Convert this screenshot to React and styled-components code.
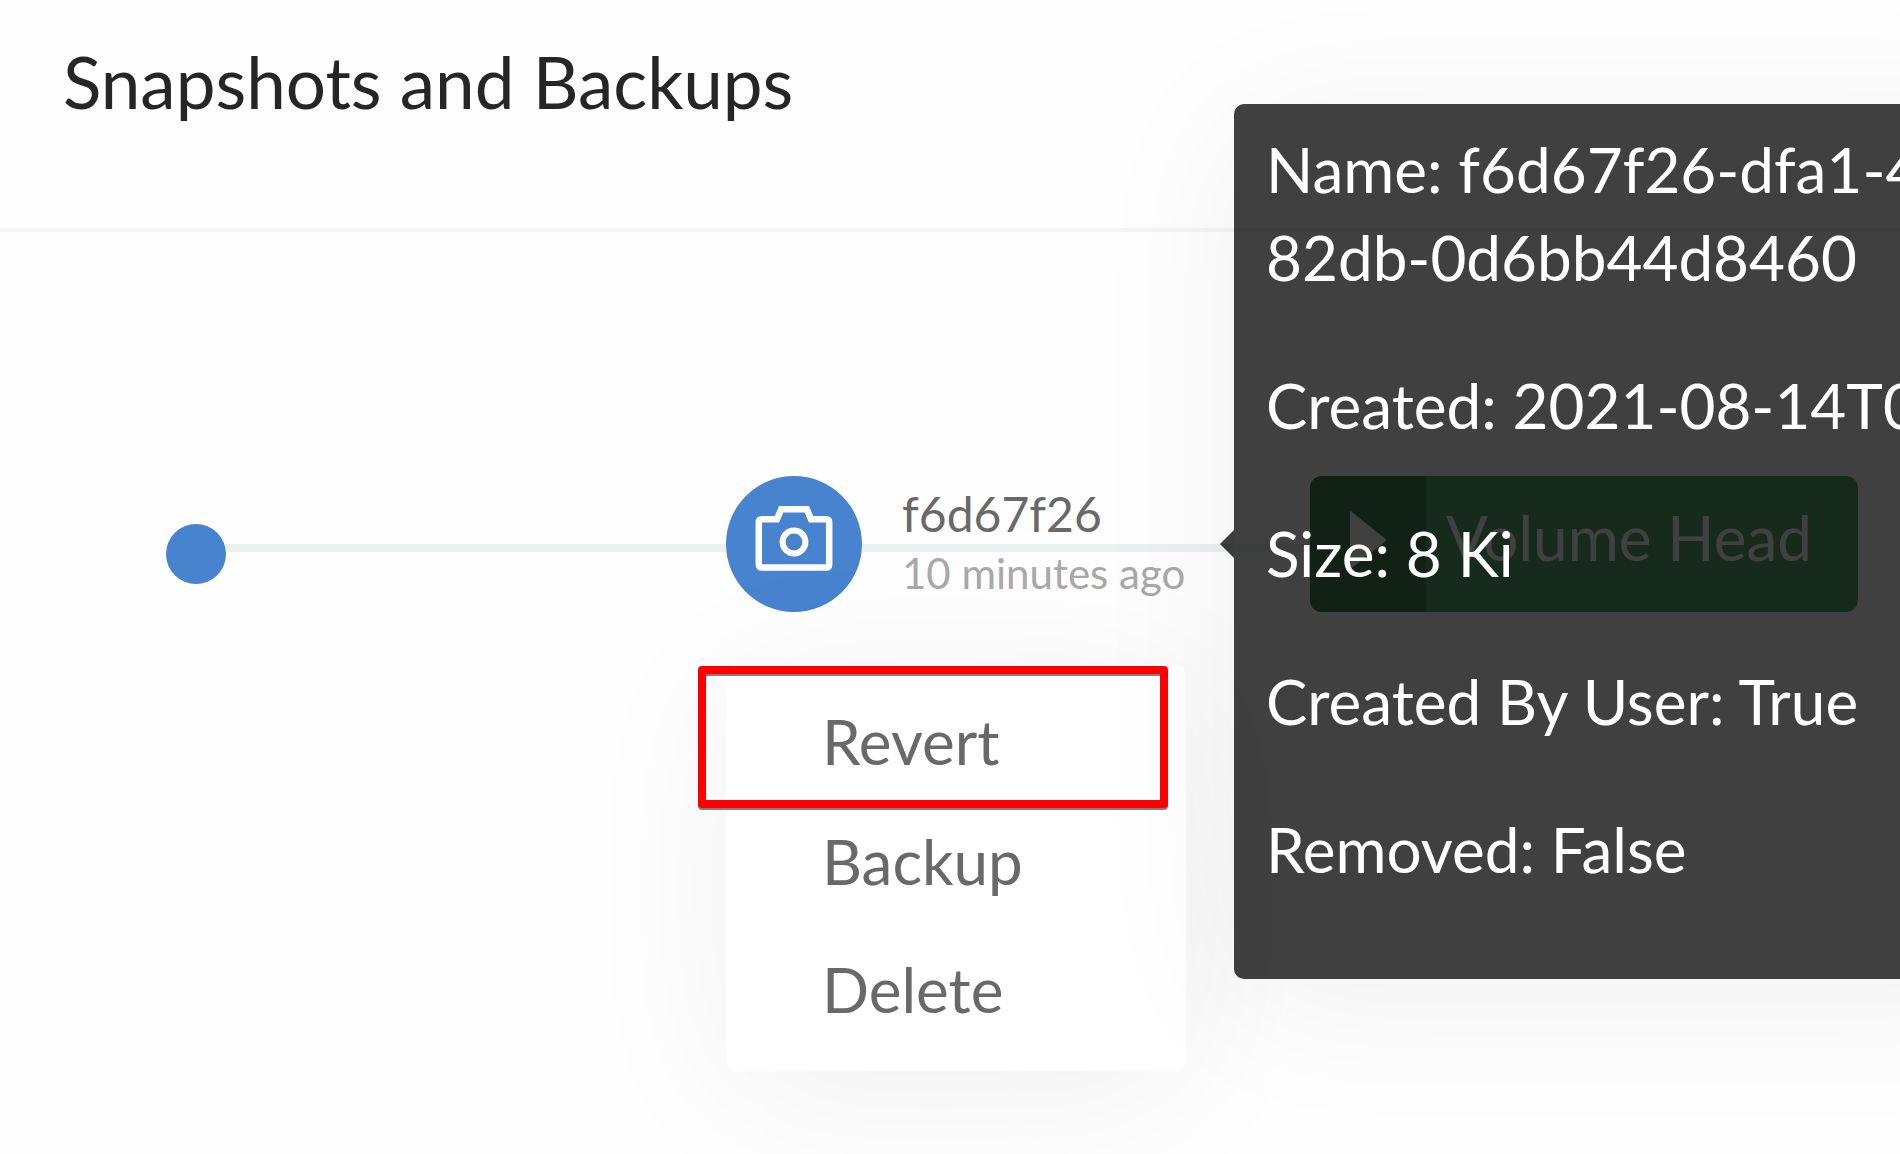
import React from 'react';
import styled, { createGlobalStyle } from 'styled-components';

const GlobalStyle = createGlobalStyle`
  *, *::before, *::after {
    box-sizing: border-box;
  }

  body {
    margin: 0;
    background: #fff;
    font-family: Lato, "Liberation Sans", sans-serif;
  }

  button {
    margin: 0;
    padding: 0;
    border: 0;
    background: none;
    font: inherit;
    color: inherit;
    text-align: left;
    cursor: pointer;
  }
`;

const floatingShadow = '0 20px 160px rgba(0, 0, 0, 0.06)';

const Card = styled.main`
  min-height: 100vh;
  overflow: hidden;
  background: #fefefe;
`;

const Header = styled.header`
  padding: 42px 63px 106px;
  border-bottom: 4px solid #f4f4f4;
`;

const Title = styled.h1`
  margin: 0;
  font-size: 71px;
  font-weight: 400;
  line-height: 80px;
  color: #262626;
`;

const Timeline = styled.section`
  display: flex;
  align-items: center;
  padding: 244px 42px 0 166px;
`;

const Origin = styled.span`
  flex: none;
  width: 60px;
  height: 60px;
  margin-top: 20px;
  border-radius: 50%;
  background: #4883d0;
`;

const Segment = styled.div`
  position: relative;
  flex: ${({ $grow }) => $grow} 1 0;
  min-width: 0;
  display: grid;
  grid-template-rows: 68px 8px 60px;
  white-space: nowrap;
`;

const Line = styled.span`
  grid-row: 2;
  background: #eaefef;
`;

const SnapshotName = styled.span`
  grid-row: 1;
  align-self: end;
  padding-left: 40px;
  font-size: 48px;
  line-height: 60px;
  color: #696969;
`;

const SnapshotAge = styled.time`
  grid-row: 3;
  padding-left: 40px;
  font-size: 42px;
  line-height: 42px;
  color: #a9a9a9;
`;

const Snapshot = styled.div`
  position: relative;
  flex: none;
`;

const SnapshotButton = styled.button`
  display: flex;
  align-items: center;
  justify-content: center;
  width: 136px;
  height: 136px;
  padding-bottom: 10px;
  border-radius: 50%;
  background: #4883d0;
`;

const Menu = styled.div`
  position: absolute;
  top: calc(100% + 52px);
  left: 0;
  z-index: 1;
  display: flex;
  flex-direction: column;
  width: 460px;
  padding: 17px 0 22px;
  border-radius: 12px;
  background: #fff;
  box-shadow: ${floatingShadow};
`;

const MenuItem = styled.button`
  height: 120px;
  margin-top: ${({ $spaced }) => ($spaced ? '8px' : '0')};
  padding: 0 96px;
  font-size: 62px;
  line-height: 88px;
  color: #696969;
`;

const Highlight = styled.span`
  position: absolute;
  top: 2px;
  left: -28px;
  width: 470px;
  height: 142px;
  border: 8px solid #ff0000;
  border-radius: 4px;
  filter: drop-shadow(0 2px 0 #808080);
  pointer-events: none;
`;

const VolumeHead = styled.button`
  flex: none;
  display: flex;
  width: 548px;
  height: 136px;
  border-radius: 12px;
  overflow: hidden;
  background: #5dac76;
  color: #fff;
`;

const PlayCell = styled.span`
  display: flex;
  align-items: center;
  justify-content: center;
  width: 116px;
  padding-bottom: 8px;
  background: #48845a;
`;

const VolumeHeadLabel = styled.span`
  align-self: center;
  padding: 0 0 14px 20px;
  font-size: 62px;
  line-height: 88px;
  white-space: nowrap;
`;

const Tooltip = styled.div`
  position: absolute;
  top: calc(50% - 440px);
  left: calc(100% - 76px);
  z-index: 2;
  width: 800px;
  padding: 21px 32px 26px;
  border-radius: 10px;
  background: rgba(0, 0, 0, 0.75);
  box-shadow: ${floatingShadow};
  color: #fff;

  &::before {
    content: '';
    position: absolute;
    top: calc(50% - 12px);
    right: 100%;
    border: 14px solid transparent;
    border-left-width: 0;
    border-right-color: rgba(0, 0, 0, 0.75);
  }
`;

const Detail = styled.p`
  margin: 0 0 60px;
  font-size: 62px;
  line-height: 88px;
`;

function CameraIcon() {
  return (
    <svg width="78" height="66" viewBox="0 0 78 66" fill="none" stroke="#fff" strokeWidth="6.5" aria-hidden="true">
      <path d="M7 13.2H22L26.2 3.2H51.8L56 13.2H71Q74.2 13.2 74.2 16.4V58.2Q74.2 61.6 71 61.6H7Q3.8 61.6 3.8 58.2V16.4Q3.8 13.2 7 13.2Z" />
      <circle cx="39" cy="36" r="11.4" strokeWidth="6" />
    </svg>
  );
}

function PlayIcon() {
  return (
    <svg width="36" height="58" viewBox="0 0 36 58" fill="#fff" aria-hidden="true">
      <path d="M0 1.5Q0 -.5 1.8 1L35 27.5Q36.6 29 35 30.5L1.8 57Q0 58.500 0 56.500Z" />
    </svg>
  );
}

const details = [
  ['Name', <>f6d67f26-dfa1-4<br />82db-0d6bb44d8460</>],
  ['Created', '2021-08-14T0'],
  ['Size', '8 Ki'],
  ['Created By User', 'True'],
  ['Removed', 'False'],
];

export default function App() {
  return (
    <Card>
      <GlobalStyle />
      <Header>
        <Title>Snapshots and Backups</Title>
      </Header>
      <Timeline>
        <Origin />
        <Segment $grow={500}>
          <Line />
        </Segment>
        <Snapshot>
          <SnapshotButton type="button" aria-label="Snapshot f6d67f26" aria-haspopup="menu" aria-expanded="true">
            <CameraIcon />
          </SnapshotButton>
          <Menu role="menu">
            <MenuItem type="button" role="menuitem">Revert</MenuItem>
            <MenuItem type="button" role="menuitem">Backup</MenuItem>
            <MenuItem type="button" role="menuitem" $spaced>Delete</MenuItem>
            <Highlight />
          </Menu>
        </Snapshot>
        <Segment $grow={448}>
          <SnapshotName>f6d67f26</SnapshotName>
          <Line />
          <SnapshotAge>10 minutes ago</SnapshotAge>
          <Tooltip role="tooltip">
            {details.map(([label, value]) => (
              <Detail key={label}>{label}: {value}</Detail>
            ))}
          </Tooltip>
        </Segment>
        <VolumeHead type="button">
          <PlayCell>
            <PlayIcon />
          </PlayCell>
          <VolumeHeadLabel>Volume Head</VolumeHeadLabel>
        </VolumeHead>
      </Timeline>
    </Card>
  );
}
